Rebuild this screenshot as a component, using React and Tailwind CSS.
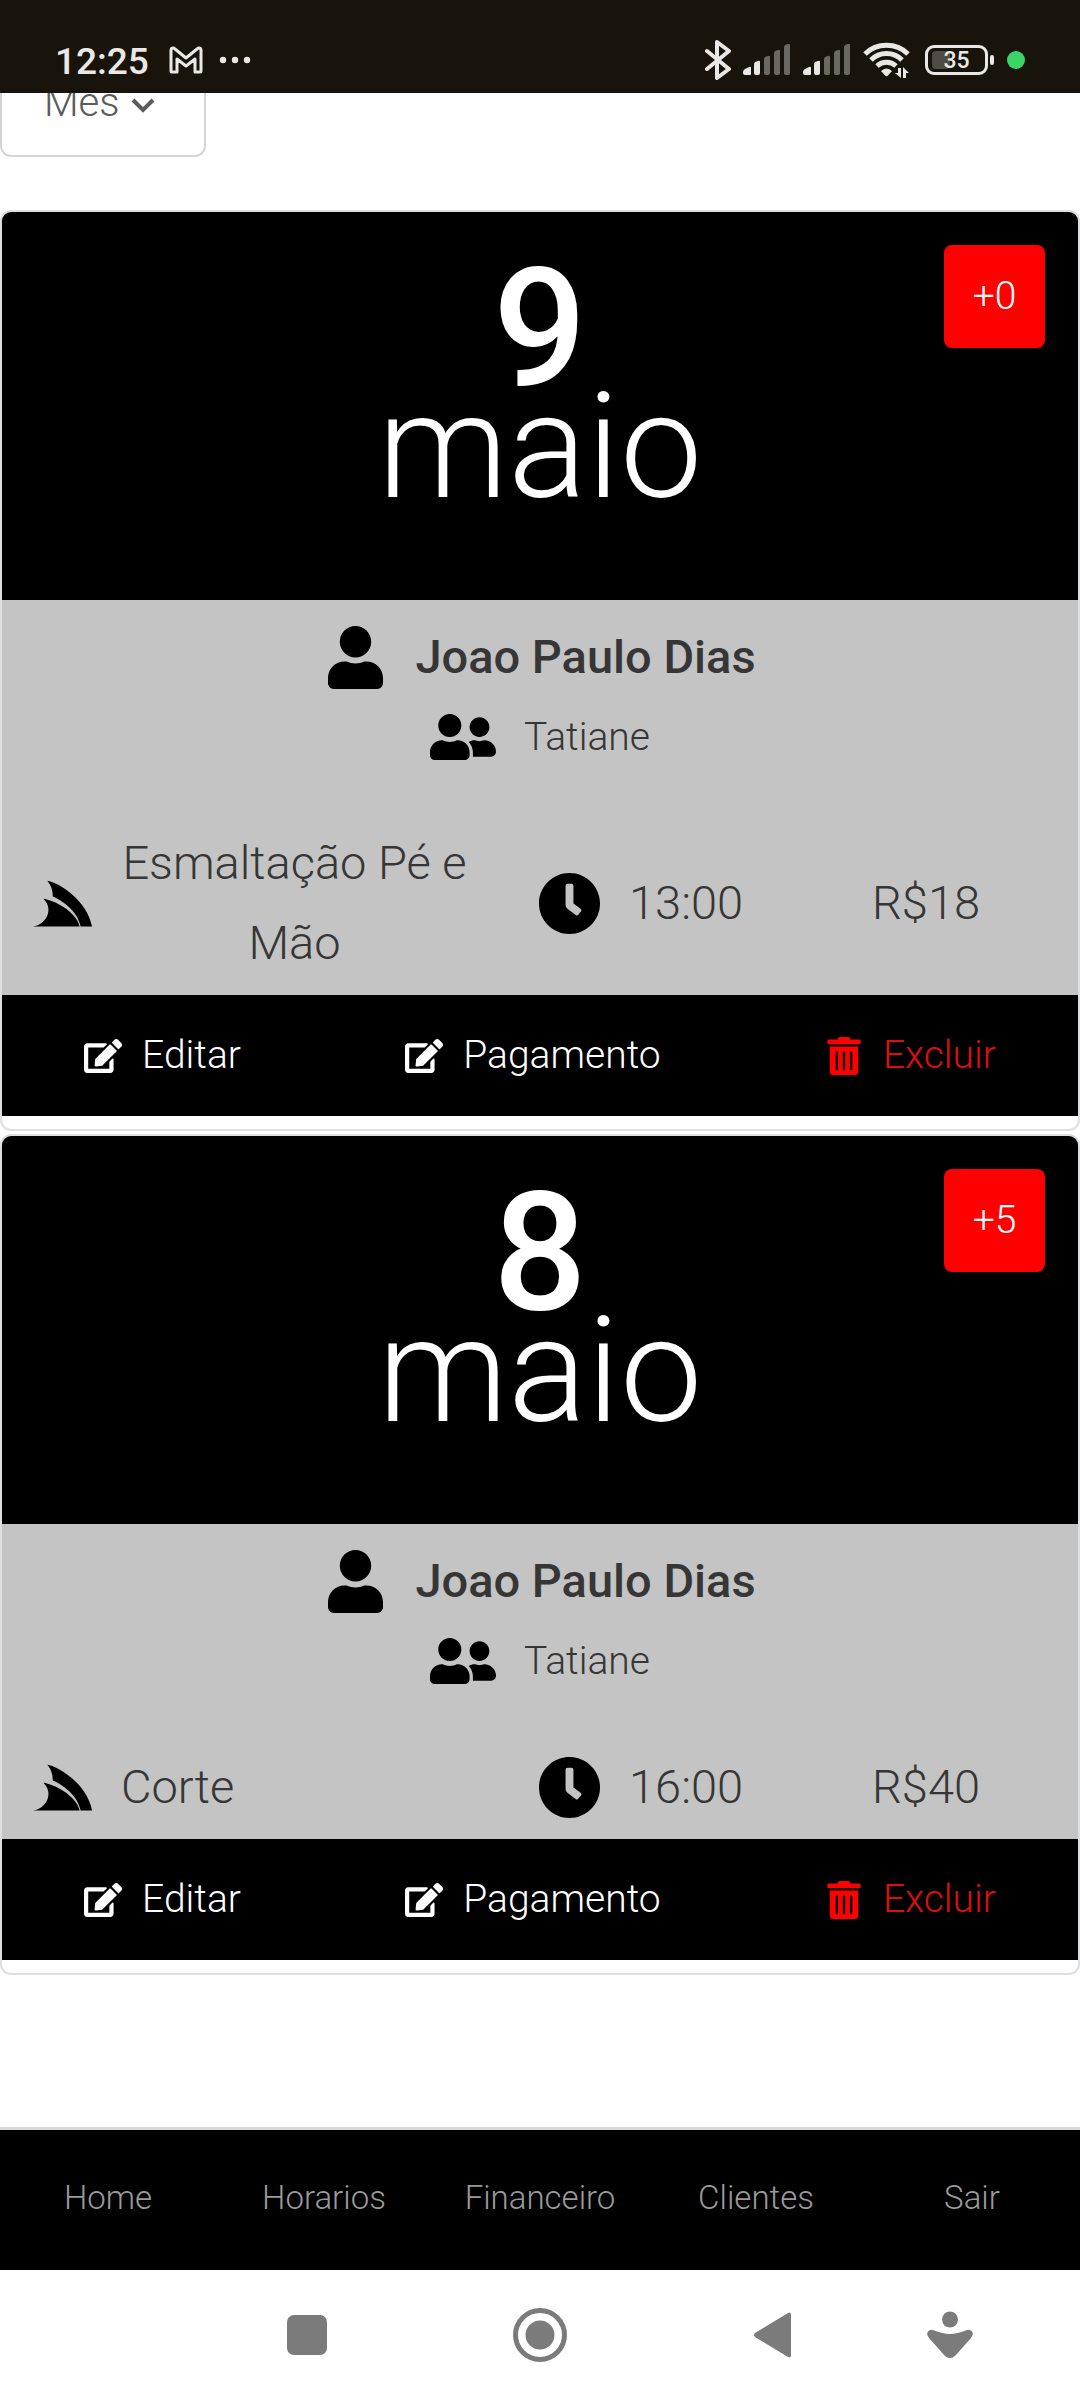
import React, { useState } from "react";
import {
  FaUser,
  FaUserFriends,
  FaClock,
  FaEdit,
  FaTrashAlt,
  FaServicestack,
} from "react-icons/fa";

const appointments = [
  {
    id: 1,
    day: "9",
    month: "maio",
    points: "+0",
    client: "Joao Paulo Dias",
    employee: "Tatiane",
    service: "Esmaltação Pé e Mão",
    time: "13:00",
    price: "R$18",
  },
  {
    id: 2,
    day: "8",
    month: "maio",
    points: "+5",
    client: "Joao Paulo Dias",
    employee: "Tatiane",
    service: "Corte",
    time: "16:00",
    price: "R$40",
  },
];

const links = ["Home", "Horarios", "Financeiro", "Clientes", "Sair"];

const SignalBars = () => (
  <svg width="48" height="32" viewBox="0 0 48 32">
    <g fill="#e9e8e4">
      <path d="M0 28q0-2 2-3l4-2q2-1 2 1v6q0 1-1 1H2q-2 0-2-2z" />
      <path d="M11 21q0-2 1-3l3-1q2-1 2 1v11q0 2-2 2h-2q-2 0-2-2z" />
    </g>
    <g fill="#6c6962">
      <path d="M21 16q0-2 1-3l3-1q2-1 2 1v16q0 2-2 2h-2q-2 0-2-2z" />
      <path d="M31 10q0-2 1-3l3-1q2-1 2 1v22q0 2-2 2h-2q-2 0-2-2z" />
      <path d="M41 4q0-2 1-3l3-1q2-1 2 1v28q0 2-2 2h-2q-2 0-2-2z" />
    </g>
  </svg>
);

const StatusBar = () => (
  <header className="relative z-10 flex h-[93px] items-end justify-between bg-[#18140b] px-[55px] pb-[11px] text-[#e9e8e4]">
    <div className="flex h-11 items-center">
      <span className="pt-1 text-[37px] leading-[44px] font-medium">12:25</span>
      <svg className="ml-5" width="34" height="28" viewBox="0 0 34 28" fill="none">
        <path
          d="M2 4.500Q2 2 4 2q1 0 2 1l11 9 11-9q1-1 2-1 2 0 2 2.500V25q0 1-1 1h-5V13l-9 7-9-7v13H3q-1 0-1-1z"
          stroke="#e9e8e4"
          strokeWidth="3"
          strokeLinejoin="round"
        />
      </svg>
      <svg className="ml-4" width="32" height="8" viewBox="0 0 32 8" fill="#e9e8e4">
        <circle cx="4" cy="4" r="3.200" />
        <circle cx="16" cy="4" r="3.200" />
        <circle cx="28" cy="4" r="3.200" />
      </svg>
    </div>

    <div className="flex h-11 items-center">
      <svg width="26" height="40" viewBox="0 0 26 40" fill="none">
        <path
          d="M2 11l22 18-12 9V2l12 9L2 29"
          stroke="#e9e8e4"
          strokeWidth="4"
          strokeLinecap="round"
          strokeLinejoin="round"
        />
      </svg>
      <span className="ml-3">
        <SignalBars />
      </span>
      <span className="ml-3">
        <SignalBars />
      </span>
      <svg className="ml-3" width="48" height="36" viewBox="0 0 48 36" fill="none">
        <g stroke="#e9e8e4" strokeWidth="5">
          <path d="M2 12a31 31 0 0 1 43 0" />
          <path d="M8 18a22 22 0 0 1 31 0" />
          <path d="M14 24a14 14 0 0 1 19 0" />
        </g>
        <path d="M18 29q5.500-5 11 0l-4 4.500q-1.500 1.500-3 0z" fill="#e9e8e4" />
        <g fill="#e9e8e4">
          <path d="M35 26h3v10l-6-5h3z" />
          <path d="M40 36h3v-5h3l-6-6z" />
        </g>
      </svg>
      <span className="ml-3.5 flex items-center">
        <span className="relative flex h-[30px] w-[63px] items-center justify-center rounded-[9px] border-3 border-[#e9e8e4]">
          <span className="absolute left-1 h-[18px] w-[18px] rounded-[4px] bg-[#504c44]"></span>
          <span className="relative pt-0.5 text-[23px] leading-[24px] font-medium">35</span>
        </span>
        <span className="ml-[2px] h-[10px] w-1 rounded-sm bg-[#e9e8e4]"></span>
      </span>
      <span className="ml-[13px] h-[18px] w-[18px] rounded-full bg-[#39d567]"></span>
    </div>
  </header>
);

const AppointmentCard = ({ item }) => (
  <article className="overflow-hidden rounded-[11px] border-2 border-[#dedfe0] bg-white pb-[13px]">
    <div className="relative bg-black pt-[58px] pb-[94px] text-center text-white">
      <p className="text-[165px] leading-[118px] font-medium">{item.day}</p>
      <p className="text-[147px] leading-[118px]">{item.month}</p>
      <span className="absolute top-[33px] right-[33px] flex h-[103px] w-[101px] items-center justify-center rounded-lg bg-[#ff0000] text-[39px]">
        {item.points}
      </span>
    </div>

    <div className="bg-[#c4c4c4] pt-[17px] pb-3 text-[#363636]">
      <div className="flex h-20 items-center justify-center gap-8 pl-1">
        <FaUser color="#000" className="h-[63px] w-[55px]" />
        <h2 className="text-[47px] font-medium">{item.client}</h2>
      </div>
      <div className="flex h-20 items-center justify-center gap-7">
        <FaUserFriends size={66} color="#000" />
        <span className="text-[39px]">{item.employee}</span>
      </div>
      <div className="mt-[46px] grid grid-cols-[50%_33%_17%] items-center pr-[34px] pl-[30px] text-[47px] leading-[80px]">
        <div className="flex items-center gap-7 pr-[70px]">
          <FaServicestack size={61} color="#000" className="shrink-0" />
          <span className="text-center">{item.service}</span>
        </div>
        <div className="flex items-center gap-7">
          <FaClock size={63} color="#000" className="shrink-0" />
          <span>{item.time}</span>
        </div>
        <span className="whitespace-nowrap">{item.price}</span>
      </div>
    </div>

    <div className="flex h-[121px] items-center justify-around bg-black text-[39px] text-white">
      <button type="button" className="flex items-center gap-5">
        <FaEdit size={38} />
        Editar
      </button>
      <button type="button" className="flex items-center gap-5">
        <FaEdit size={38} />
        Pagamento
      </button>
      <button type="button" className="flex items-center gap-5 text-[#dc0f0f]">
        <FaTrashAlt size={38} color="#ff0000" />
        Excluir
      </button>
    </div>
  </article>
);

const SystemBar = () => (
  <div className="grid h-[130px] grid-cols-[190fr_233fr_233fr_233fr_122fr_69fr] items-center justify-items-center bg-white">
    <span></span>
    <button type="button" aria-label="Recentes">
      <svg width="40" height="40" viewBox="0 0 40 40">
        <rect width="40" height="40" rx="7" fill="#7b7b7b" />
      </svg>
    </button>
    <button type="button" aria-label="Início">
      <svg width="54" height="54" viewBox="0 0 54 54">
        <circle cx="27" cy="27" r="24.500" fill="none" stroke="#7b7b7b" strokeWidth="5" />
        <circle cx="27" cy="27" r="14.500" fill="#7b7b7b" />
      </svg>
    </button>
    <button type="button" aria-label="Voltar">
      <svg width="38" height="46" viewBox="0 0 38 46">
        <path d="M1 21 34 1q3-1.500 3 2v40q0 3.500-3 2L1 25q-2-2 0-4z" fill="#7b7b7b" />
      </svg>
    </button>
    <button type="button" aria-label="Acessibilidade">
      <svg width="46" height="48" viewBox="0 0 46 48" fill="#7b7b7b">
        <circle cx="23" cy="8.500" r="8" />
        <path d="M2 27q-3-4-1-6.500 2-2.500 5-1.500 10 4 17 4t17-4q3-1 5 1.500t-1 6.500L28.500 44.500q-5.500 5-11 0z" />
      </svg>
    </button>
  </div>
);

const App = () => {
  const [period, setPeriod] = useState("Mes");

  return (
    <div className="flex min-h-screen flex-col bg-white font-['Roboto',sans-serif] font-light">
      <StatusBar />

      <main className="-mt-11 flex grow flex-col">
        <div className="relative mb-[53px] self-start">
          <select
            aria-label="Periodo"
            value={period}
            onChange={(e) => setPeriod(e.target.value)}
            className="h-[108px] w-[206px] appearance-none rounded-[11px] border-2 border-[#d4d4d4] bg-white pl-[42px] text-[40px] text-[#5b5b5b]"
          >
            <option>Mes</option>
            <option>Dia</option>
          </select>
          <svg
            className="pointer-events-none absolute top-[48px] left-[131px]"
            width="24"
            height="16"
            viewBox="0 0 24 16"
            fill="none"
          >
            <path d="M2 3l10 10L22 3" stroke="#5b5b5b" strokeWidth="4" />
          </svg>
        </div>

        <div className="flex flex-col gap-[3px]">
          {appointments.map((item) => (
            <AppointmentCard key={item.id} item={item} />
          ))}
        </div>
      </main>

      <nav className="flex h-[143px] items-center border-t-3 border-[#d8d8d8] bg-black pb-1 text-[33px] text-[#9a9a9a]">
        {links.map((label) => (
          <a key={label} href="#" className="flex-1 text-center">
            {label}
          </a>
        ))}
      </nav>

      <SystemBar />
    </div>
  );
};

export default App;
